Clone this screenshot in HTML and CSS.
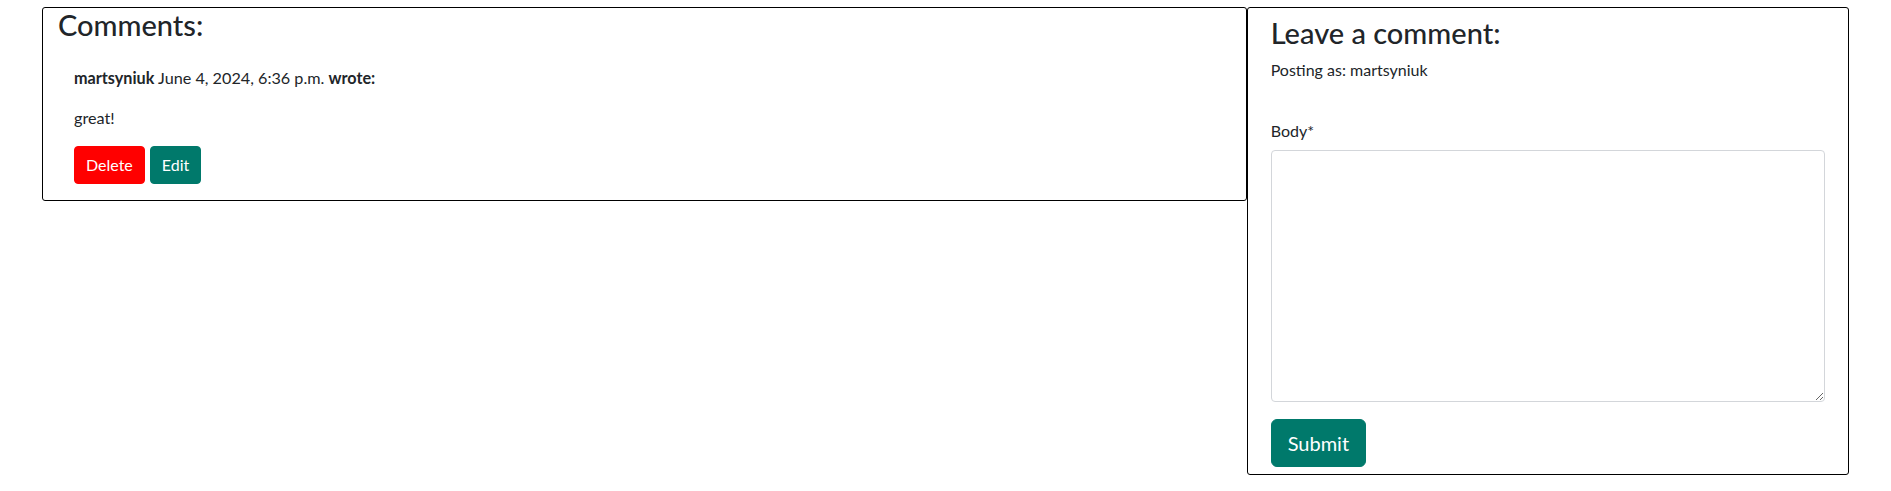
FILE: index.html
```html
<!DOCTYPE html>
<html lang="en">
<head>
<meta charset="utf-8">
<title>Comments</title>
<link rel="stylesheet" href="styles.css">
</head>
<body>
<main class="page">
  <div class="comments-grid">
    <section class="card card-comments">
      <h3 class="card-title">Comments:</h3>
      <div class="comment">
        <p class="comment-meta"><strong>martsyniuk</strong> <span class="comment-date">June 4, 2024, 6:36 p.m.</span> <strong>wrote:</strong></p>
        <p class="comment-body">great!</p>
        <div class="comment-actions">
          <button class="btn btn-delete" type="button">Delete</button>
          <button class="btn btn-edit" type="button">Edit</button>
        </div>
      </div>
    </section>
    <section class="card card-form">
      <h3 class="card-title">Leave a comment:</h3>
      <p class="posting-as">Posting as: martsyniuk</p>
      <form class="comment-form">
        <label class="form-label" for="id_body">Body*</label>
        <textarea class="form-control" id="id_body" name="body"></textarea>
        <button class="btn btn-lg btn-submit" type="submit">Submit</button>
      </form>
    </section>
  </div>
</main>
</body>
</html>
```

FILE: styles.css
```css
* { box-sizing: border-box; }

html, body {
  margin: 0;
  padding: 0;
  background: #fff;
}

body {
  font-family: "Lato", "Open Sans", sans-serif;
  font-size: 16px;
  line-height: 1.5;
  color: #212529;
}

.page {
  padding: 7px 42px 0;
}

.comments-grid {
  display: grid;
  grid-template-columns: 2fr 1fr;
  align-items: start;
}

.card {
  border: 1px solid #000;
  border-radius: 3px;
  background: #fff;
}

.card-title {
  margin: 0 0 8px;
  font-size: 29px;
  font-weight: 500;
  line-height: 33.6px;
  color: #212529;
}

.card-comments {
  padding: 0 16px 16px 15px;
}

.comment {
  padding: 16px 0 0 16px;
}

.comment p {
  margin: 0 0 16px;
  font-size: 16.2px;
  line-height: 24px;
}

.comment-meta strong {
  font-weight: 700;
}

.comment-actions {
  display: flex;
  gap: 5px;
}

.btn {
  display: inline-block;
  font-family: inherit;
  font-size: 16px;
  line-height: 1.5;
  padding: 6px 11px;
  border: 1px solid transparent;
  border-radius: 4px;
  color: #fff;
  cursor: pointer;
}

.btn-delete {
  background: #ff0000;
  border-color: #ff0000;
}

.btn-edit,
.btn-submit {
  background: #00796b;
  border-color: #00796b;
}

.btn-lg {
  font-size: 20px;
  padding: 8px 16px;
  border-radius: 6px;
}

.card-form {
  padding: 8px 23px 7px;
}

.posting-as {
  margin: 0 0 37px;
}

.comment-form {
  display: flex;
  flex-direction: column;
  align-items: flex-start;
}

.form-label {
  display: block;
  margin-bottom: 7px;
}

.form-control {
  display: block;
  width: 100%;
  height: 252px;
  margin: 0 0 17px;
  padding: 6px 12px;
  font-family: inherit;
  font-size: 16px;
  border: 1px solid #d3d6da;
  border-radius: 4px;
  resize: vertical;
  background: #fff;
}
```
